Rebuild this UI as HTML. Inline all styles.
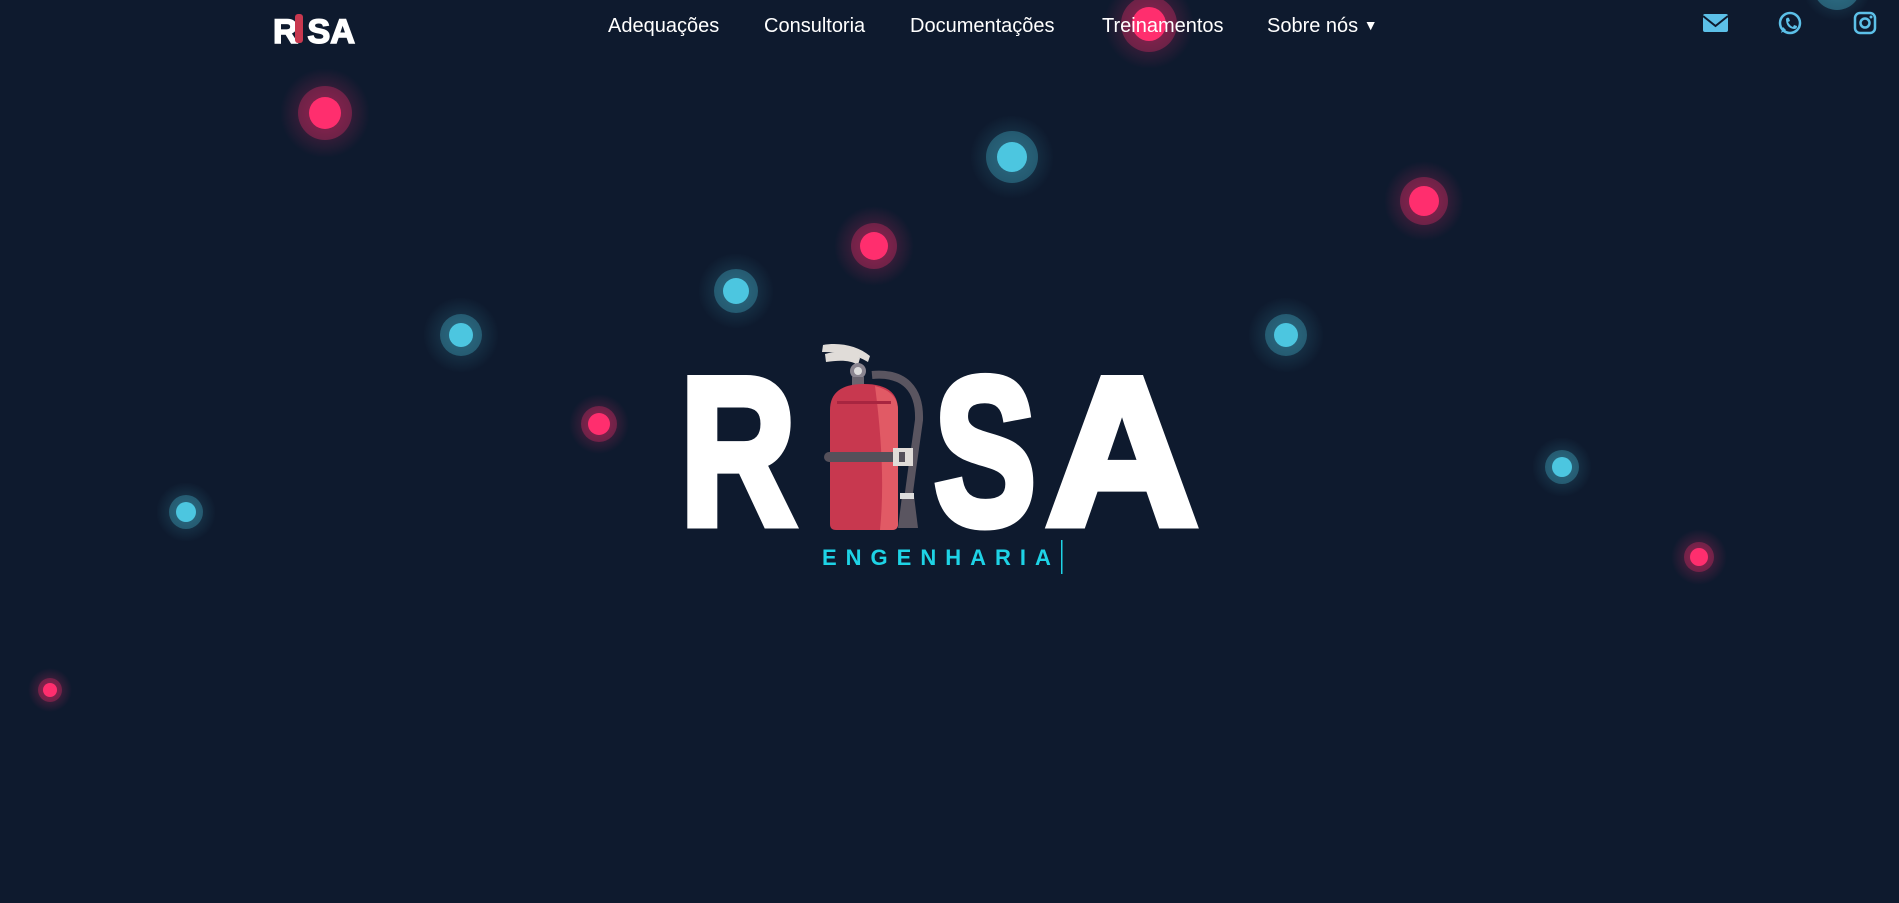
<!DOCTYPE html>
<html><head><meta charset="utf-8"><style>
html,body{margin:0;padding:0;width:1899px;height:903px;overflow:hidden;background:#0e1a2e;font-family:"Liberation Sans",sans-serif}
.nav{position:absolute;top:15px;color:#fff;font-size:20px;white-space:nowrap}
</style></head><body>
<svg width="1899" height="903" style="position:absolute;left:0;top:0">
<defs>
<radialGradient id="gp"><stop offset="0" stop-color="#ff2e6e" stop-opacity=".35"/><stop offset="1" stop-color="#ff2e6e" stop-opacity="0"/></radialGradient>
<radialGradient id="gc"><stop offset="0" stop-color="#4cc6e0" stop-opacity=".25"/><stop offset="1" stop-color="#4cc6e0" stop-opacity="0"/></radialGradient>
</defs>
<g fill="#ff2e6e">
<circle cx="325" cy="113" r="45" fill="url(#gp)"/><circle cx="325" cy="113" r="27" opacity=".3"/><circle cx="325" cy="113" r="16"/>
<circle cx="1149" cy="24" r="45" fill="url(#gp)"/><circle cx="1149" cy="24" r="28" opacity=".3"/><circle cx="1149" cy="24" r="17"/>
<circle cx="1424" cy="201" r="40" fill="url(#gp)"/><circle cx="1424" cy="201" r="24" opacity=".3"/><circle cx="1424" cy="201" r="15"/>
<circle cx="874" cy="246" r="40" fill="url(#gp)"/><circle cx="874" cy="246" r="23" opacity=".3"/><circle cx="874" cy="246" r="14"/>
<circle cx="599" cy="424" r="30" fill="url(#gp)"/><circle cx="599" cy="424" r="18" opacity=".3"/><circle cx="599" cy="424" r="11"/>
<circle cx="1699" cy="557" r="28" fill="url(#gp)"/><circle cx="1699" cy="557" r="15" opacity=".3"/><circle cx="1699" cy="557" r="9"/>
<circle cx="50" cy="690" r="22" fill="url(#gp)"/><circle cx="50" cy="690" r="12" opacity=".3"/><circle cx="50" cy="690" r="7"/>
</g>
<g fill="#4cc6e0">
<circle cx="1012" cy="157" r="42" fill="url(#gc)"/><circle cx="1012" cy="157" r="26" opacity=".3"/><circle cx="1012" cy="157" r="15"/>
<circle cx="1837" cy="-14" r="35" fill="url(#gc)"/><circle cx="1837" cy="-14" r="24" opacity=".35"/>
<circle cx="736" cy="291" r="38" fill="url(#gc)"/><circle cx="736" cy="291" r="22" opacity=".3"/><circle cx="736" cy="291" r="13"/>
<circle cx="461" cy="335" r="38" fill="url(#gc)"/><circle cx="461" cy="335" r="21" opacity=".3"/><circle cx="461" cy="335" r="12"/>
<circle cx="1286" cy="335" r="38" fill="url(#gc)"/><circle cx="1286" cy="335" r="21" opacity=".3"/><circle cx="1286" cy="335" r="12"/>
<circle cx="1562" cy="467" r="30" fill="url(#gc)"/><circle cx="1562" cy="467" r="17" opacity=".3"/><circle cx="1562" cy="467" r="10"/>
<circle cx="186" cy="512" r="30" fill="url(#gc)"/><circle cx="186" cy="512" r="17" opacity=".3"/><circle cx="186" cy="512" r="10"/>
</g>
<g font-family="Liberation Sans, sans-serif" font-weight="bold" fill="#fff" stroke="#fff" stroke-width="9" stroke-linejoin="miter" font-size="210">
<text x="680" y="524" textLength="116" lengthAdjust="spacingAndGlyphs">R</text>
<text x="934" y="524" textLength="102" lengthAdjust="spacingAndGlyphs">S</text>
<text x="1046" y="524" textLength="152" lengthAdjust="spacingAndGlyphs">A</text>
</g>
<g>
<path d="M872 375 C905 372 920 390 919 420 L912 470 L908 500" fill="none" stroke="#5a5560" stroke-width="8"/>
<path d="M902 496 L914 496 L918 528 L898 528 Z" fill="#5a5560"/>
<rect x="900" y="493" width="14" height="6" fill="#ddd"/>
<path d="M825 354 C840 350 852 352 860 358 L858 365 C850 360 840 360 826 362 Z" fill="#e0dcd8"/>
<path d="M823 345 C840 342 858 346 870 356 L868 362 C855 354 840 352 822 352 Z" fill="#e0dcd8"/>
<circle cx="858" cy="371" r="8" fill="#8a8590"/><circle cx="858" cy="371" r="4" fill="#ddd"/>
<rect x="852" y="377" width="12" height="8" fill="#6a6570"/>
<path d="M830 410 Q830 384 864 384 Q898 384 898 410 L898 524 Q898 530 892 530 L836 530 Q830 530 830 524 Z" fill="#c8384f"/>
<path d="M875 386 Q898 392 898 410 L898 524 Q898 530 892 530 L880 530 Q886 470 875 386Z" fill="#e15a65"/>
<rect x="837" y="401" width="54" height="3" fill="#a82540"/>
<rect x="824" y="452" width="88" height="10" rx="5" fill="#55505a"/>
<rect x="893" y="448" width="20" height="18" fill="#e0dcd8"/><rect x="899" y="452" width="6" height="10" fill="#55505a"/>
</g>
<text x="822" y="565" font-family="Liberation Sans, sans-serif" font-weight="bold" font-size="22" fill="#1ed3e6" letter-spacing="9">ENGENHARIA</text>
<rect x="1061" y="540" width="1.5" height="34" fill="#1ed3e6"/>
<text x="273" y="43" font-family="Liberation Sans, sans-serif" font-weight="bold" font-size="34" fill="#fff" stroke="#fff" stroke-width="1.5" textLength="82" lengthAdjust="spacingAndGlyphs">R SA</text>
<rect x="295" y="14" width="8" height="29" rx="3" fill="#c8384f"/>
<g fill="#5cc0e8">
<rect x="1703" y="14" width="25" height="18" rx="2"/>
<path d="M1703 16 L1715.5 26 L1728 16" stroke="#0e1a2e" stroke-width="2" fill="none"/>
<circle cx="1790" cy="23" r="10" fill="none" stroke="#5cc0e8" stroke-width="2.5"/>
<path d="M1781 33 L1783 27 L1786 30Z"/>
<path d="M1786 19 Q1787 17 1789 18 L1790 21 L1788 22 Q1790 26 1793 27 L1794 25 L1797 26 Q1797 29 1794 29 Q1786 28 1786 19Z"/>
<rect x="1855" y="13" width="20" height="20" rx="5" fill="none" stroke="#5cc0e8" stroke-width="2.5"/>
<circle cx="1865" cy="23" r="4.5" fill="none" stroke="#5cc0e8" stroke-width="2.5"/>
<circle cx="1871" cy="17" r="1.5"/>
</g>
</svg>
<div class="nav" style="left:608px">Adequações</div>
<div class="nav" style="left:764px">Consultoria</div>
<div class="nav" style="left:910px">Documentações</div>
<div class="nav" style="left:1102px">Treinamentos</div>
<div class="nav" style="left:1267px">Sobre nós <span style="font-size:14px;position:relative;top:-2px">▼</span></div>
</body></html>
